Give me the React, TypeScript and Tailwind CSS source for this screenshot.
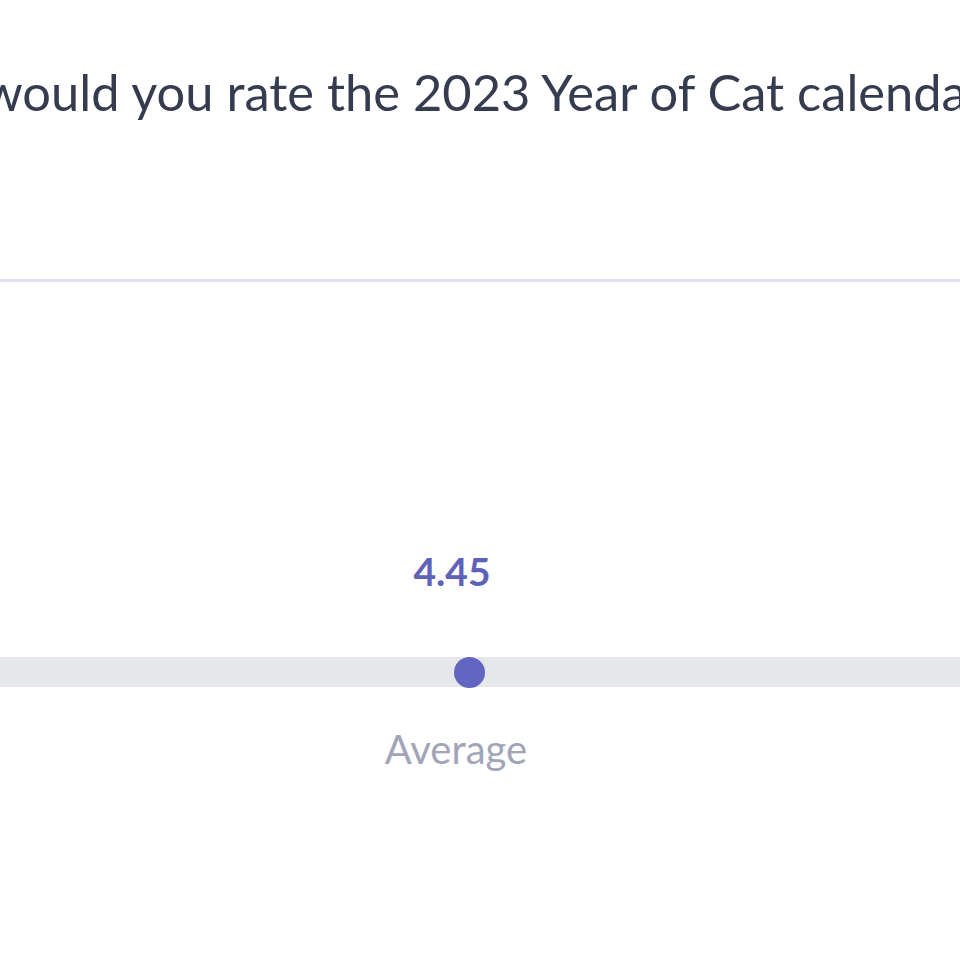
import React from "react";

export default function App() {
  return (
    <div className="w-[960px] h-[960px] overflow-hidden bg-white relative" style={{ fontFamily: "Lato, 'Noto Sans', sans-serif" }}>
      <div className="w-[1400px] ml-[-263px] flex flex-col items-center">
        <div className="pt-[62px] text-[50.6px] leading-[60px] text-[#363c4f] whitespace-nowrap">
          How would you rate the 2023 Year of Cat calendar?
        </div>
      </div>
      <div className="mt-[157px] h-[3px] bg-[#e3e1ee]" />
      <div className="w-[1400px] ml-[-248px] flex flex-col items-center mt-[265px]">
        <div className="text-[39px] leading-[48px] font-bold text-[#5f62b9]">4.45</div>
      </div>
      <div className="mt-[62px] h-[30px] bg-[#e6e7eb] flex items-center">
        <div className="ml-[454px] w-[31px] h-[31px] rounded-full bg-[#6366c1]" />
      </div>
      <div className="w-[1400px] ml-[-244px] flex flex-col items-center mt-[38px]">
        <div className="text-[40px] leading-[48px] text-[#a2a5b8]">Average</div>
      </div>
    </div>
  );
}
